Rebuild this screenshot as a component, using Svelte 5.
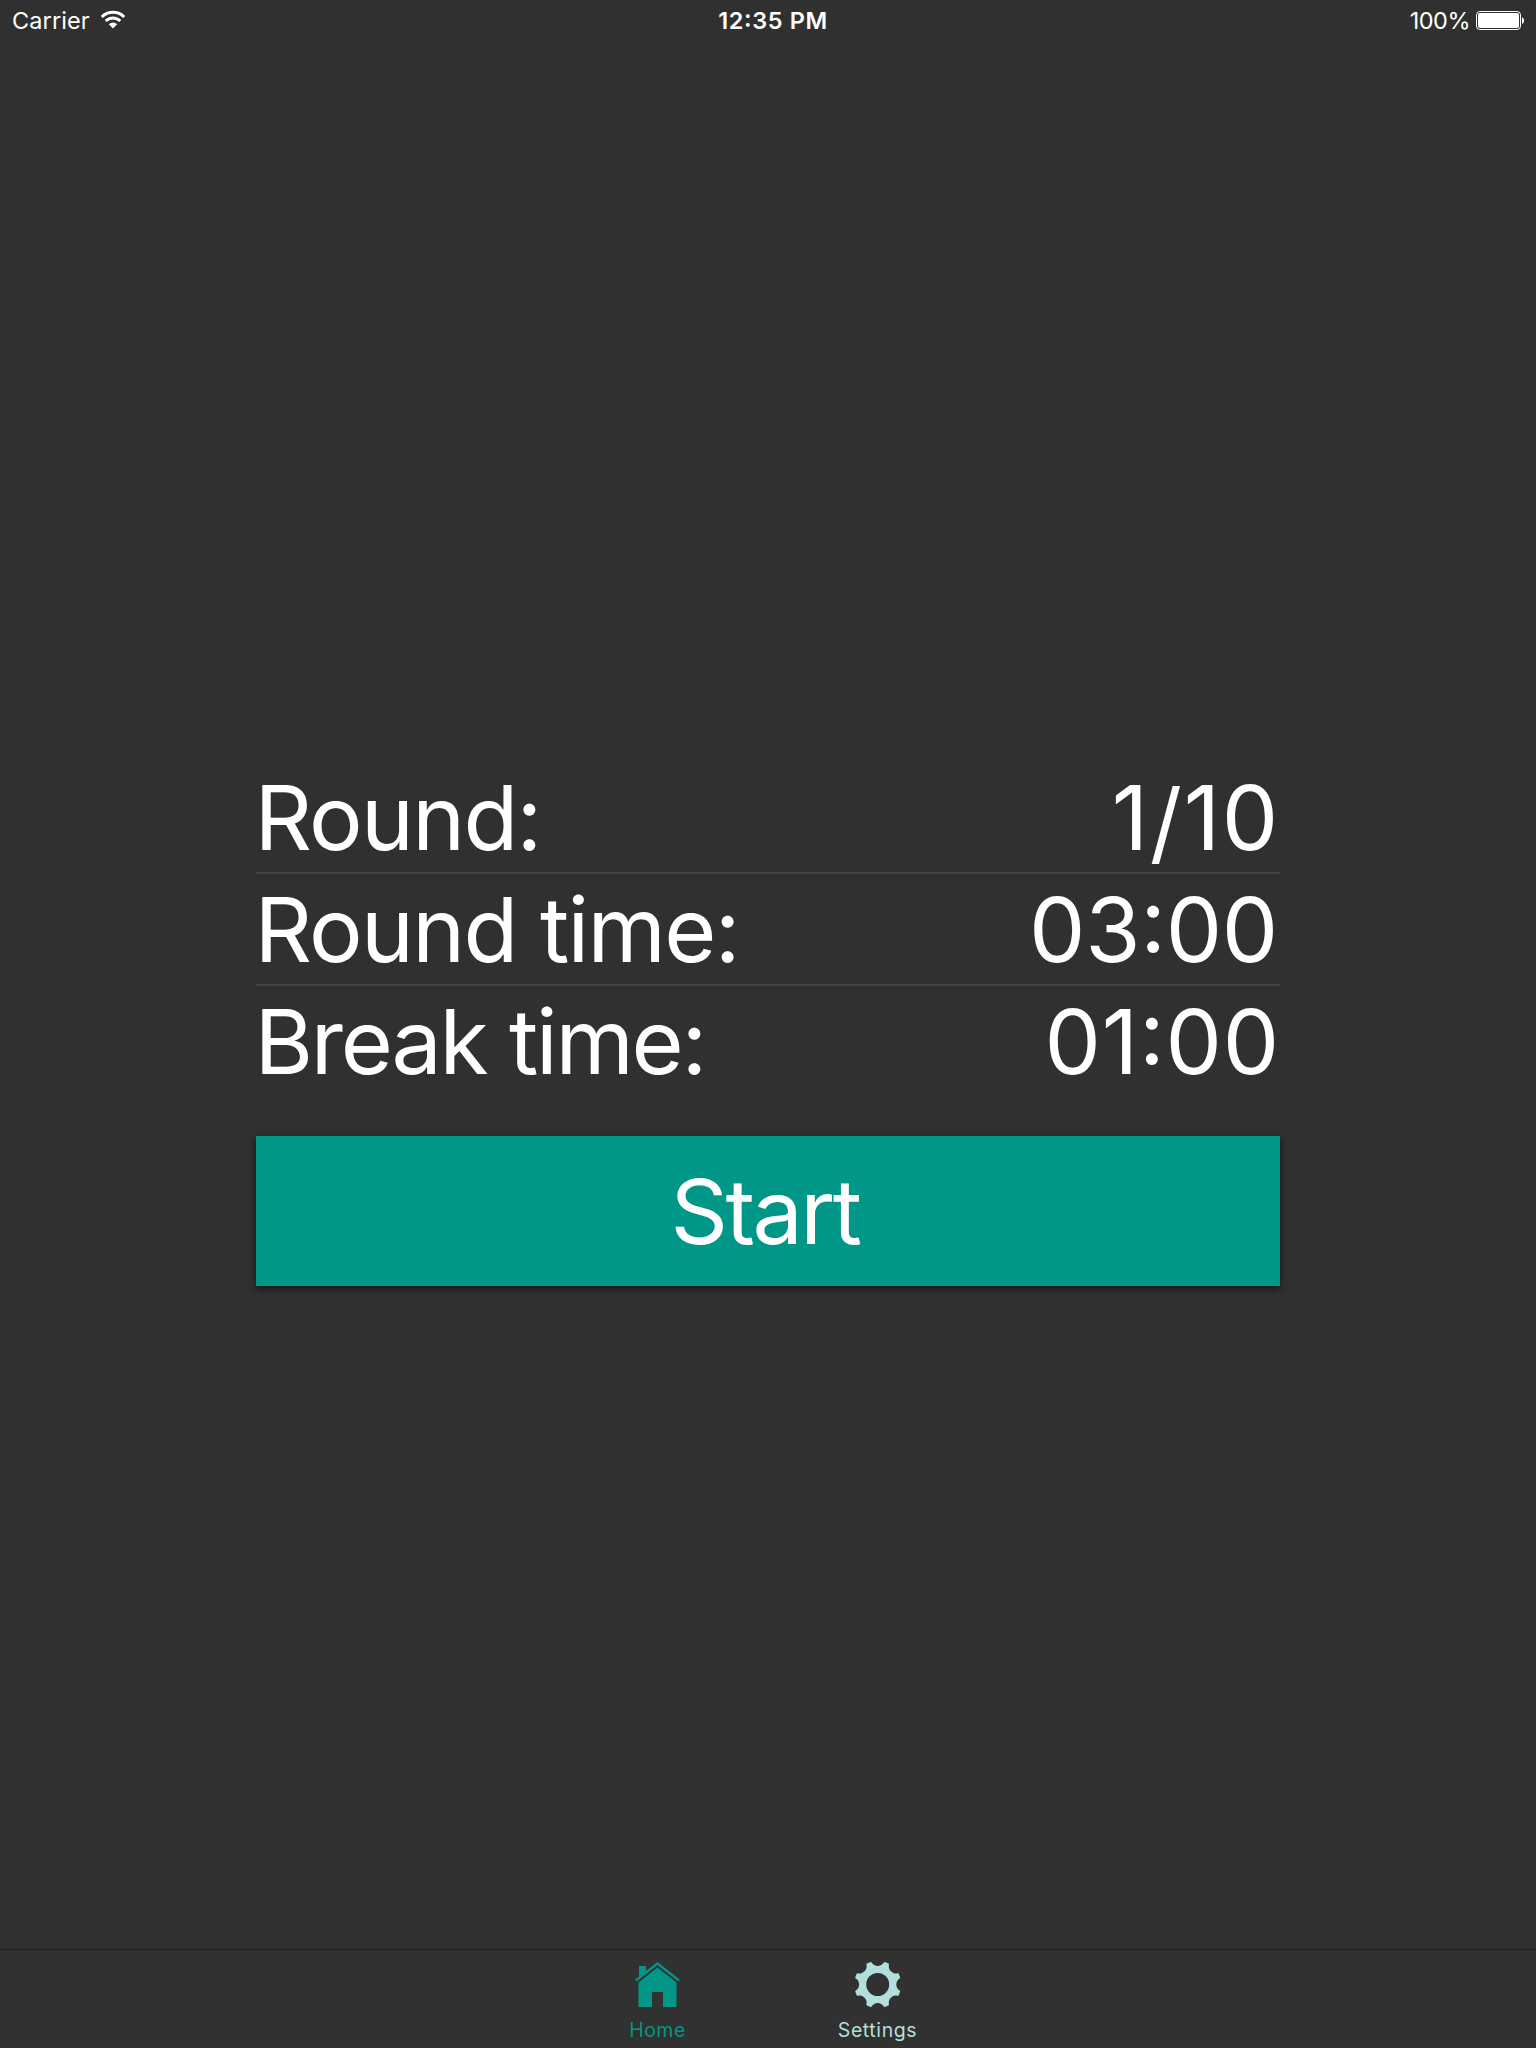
<script>
  const rows = [
    { label: 'Round:', value: ['1', '/', '10'], kind: 'round' },
    { label: 'Round time:', value: ['03:00'], kind: 'time' },
    { label: 'Break time:', value: ['01:00'], kind: 'break' }
  ];

  // Gear outline: eight teeth joined by circular scallops.
  const gear = (() => {
    const at = (deg, r) => {
      const a = (deg * Math.PI) / 180;
      return `${(22.7 + r * Math.sin(a)).toFixed(2)} ${(22.5 - r * Math.cos(a)).toFixed(2)}`;
    };
    let d = `M${at(-17.5, 23.6)}`;
    for (let i = 0; i < 8; i++) {
      const c = i * 45;
      d += ` L${at(c - 15.3, 22.8)} A7 7 0 0 0 ${at(c + 15.3, 22.8)}`;
      d += ` L${at(c + 17.5, 23.6)} L${at(c + 27.5, 23.6)}`;
    }
    return d + 'Z M34.2 22.5 A11.5 11.5 0 1 0 11.2 22.5 A11.5 11.5 0 1 0 34.2 22.5Z';
  })();
</script>

<div class="screen">
  <header class="status">
    <div class="carrier">
      <span class="carrier-name">Carrier</span>
      <svg class="wifi" width="26" height="20" viewBox="0 0 26 20">
        <g fill="none" stroke="#fff" stroke-width="2.9">
          <path d="M1.8 6.9 A15.8 15.8 0 0 1 24.2 6.9" />
          <path d="M5.7 11.1 A10.2 10.2 0 0 1 20.3 11.1" />
        </g>
        <path d="M13 18.6 L8.8 14.3 A6 6 0 0 1 17.2 14.3Z" fill="#fff" />
      </svg>
    </div>
    <time class="clock">12:35 PM</time>
    <div class="power">
      <span class="percent">100%</span>
      <svg class="battery" width="50" height="20" viewBox="0 0 50 20">
        <rect x="0.5" y="0.5" width="44" height="18" rx="3.4" fill="none" stroke="#fff" />
        <rect x="2" y="2" width="41" height="15" rx="2" fill="#fff" />
        <path d="M46 6 A4 4 0 0 1 46 13Z" fill="#fff" />
      </svg>
    </div>
  </header>

  <main>
    <div class="panel">
      {#each rows as row}
        <div class="row">
          <span class="label {row.kind}">{row.label}</span>
          <span class="value {row.kind}">{#each row.value as part}<span class:slash={part === '/'}>{part}</span>{/each}</span>
        </div>
      {/each}
      <button>Start</button>
    </div>
  </main>

  <nav>
    <a class="tab home" href="#home">
      <svg width="46" height="46" viewBox="0 0 46 46" fill="currentColor">
        <path d="M4 4H11V9.2L4 16Z" />
        <path d="M22.5 0 L44.8 17.6 L43.4 19.4 L22.5 3 L1.6 19.4 L0.2 17.6Z" />
        <path d="M22.5 5.5 L41.5 20.5 V45 H28 V30 H17 V45 H3.5 V20.5Z" />
      </svg>
      <span>Home</span>
    </a>
    <a class="tab settings" href="#settings">
      <svg width="46" height="46" viewBox="0 0 46 46" fill="currentColor">
        <path d={gear} fill-rule="evenodd" />
      </svg>
      <span>Settings</span>
    </a>
  </nav>
</div>

<style>
  :global(body) {
    background: #303030;
  }
  .screen {
    display: flex;
    flex-direction: column;
    width: 1536px;
    height: 2048px;
    overflow: hidden;
    background: #303030;
    color: #fff;
    font-family: Inter, 'Liberation Sans', sans-serif;
  }
  .status {
    display: grid;
    grid-template-columns: 1fr auto 1fr;
    height: 40px;
    box-sizing: border-box;
    padding: 0 10px 0 12px;
    font-size: 23.5px;
    line-height: 41px;
  }
  .carrier,
  .power {
    display: flex;
    align-items: flex-start;
  }
  .power {
    justify-content: flex-end;
  }
  .carrier-name {
    letter-spacing: 0.1px;
  }
  .wifi {
    margin: 10px 0 0 10px;
  }
  .clock {
    font-weight: 600;
    letter-spacing: 0.6px;
    font-feature-settings: 'case' 1;
    margin-left: 8px;
  }
  .percent {
    letter-spacing: -0.5px;
  }
  .battery {
    margin: 11px 0 0 6px;
  }
  main {
    flex: 1;
    display: flex;
    justify-content: center;
    padding-top: 722px;
  }
  .panel {
    width: 1024px;
  }
  .row {
    display: flex;
    justify-content: space-between;
    height: 110px;
    line-height: 112px;
    font-size: 89.5px;
    border-bottom: 2px solid #434343;
    white-space: nowrap;
  }
  .row:nth-child(3) {
    border-bottom: 0;
  }
  .label {
    margin-left: -1.5px;
    letter-spacing: -1.7px;
  }
  .label.break {
    letter-spacing: -2.3px;
  }
  .value.round {
    letter-spacing: 1.7px;
  }
  .slash {
    display: inline-block;
    height: 110px;
    transform: translateY(4px);
  }
  .value.time {
    margin-right: 2px;
    letter-spacing: -0.3px;
    font-feature-settings: 'case' 1;
  }
  .value.break {
    letter-spacing: 0.8px;
    font-feature-settings: 'case' 1;
  }
  button {
    display: block;
    width: 100%;
    height: 150px;
    margin: 40px 0 0;
    padding: 0 6px 0 0;
    border: 0;
    background: #009688;
    color: inherit;
    font: inherit;
    font-size: 89.5px;
    letter-spacing: -2.6px;
    line-height: 152px;
    box-shadow: 0 3px 7px rgba(0, 0, 0, 0.55);
  }
  nav {
    display: flex;
    justify-content: center;
    gap: 68px;
    height: 99px;
    box-sizing: border-box;
    padding-right: 1px;
    border-top: 1px solid #212121;
    background: #313131;
  }
  .tab {
    display: flex;
    flex-direction: column;
    align-items: center;
    width: 152px;
    padding-top: 12px;
    box-sizing: border-box;
    text-decoration: none;
    font-size: 19.5px;
    line-height: 24px;
    letter-spacing: 0.5px;
  }
  .tab span {
    margin-top: 10px;
  }
  .home {
    color: #009688;
  }
  .settings {
    color: #b2dfdb;
    letter-spacing: 0.6px;
  }
</style>
